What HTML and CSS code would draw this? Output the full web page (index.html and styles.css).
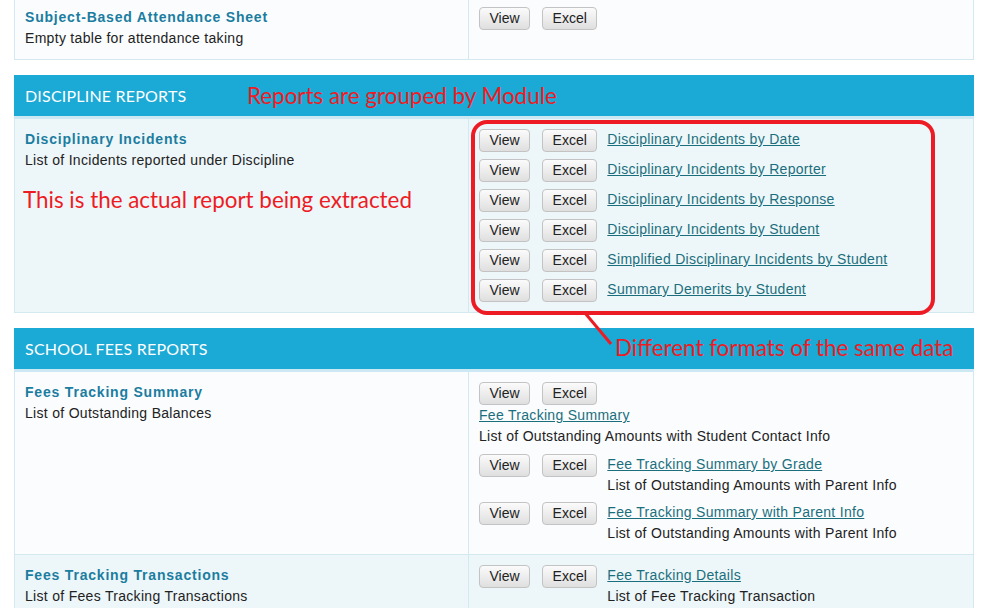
FILE: index.html
```html
<!DOCTYPE html>
<html lang="en">
<head>
  <meta charset="UTF-8">
  <title>Reports</title>
  <link rel="stylesheet" href="styles.css">
</head>
<body>
  <div class="page">
    <!-- tail of the previous group -->
    <div class="report-table">
      <div class="row">
        <div class="cell name">
          <a class="title">Subject-Based Attendance Sheet</a>
          <p class="desc">Empty table for attendance taking</p>
        </div>
        <div class="cell formats">
          <div class="item">
            <span class="buttons"><button>View</button><button>Excel</button></span>
          </div>
        </div>
      </div>
    </div>

    <section class="group">
      <h2 class="group-head">Discipline Reports <span class="note note-head">Reports are grouped by Module</span></h2>
      <div class="report-table">
        <div class="row alt">
          <div class="cell name">
            <a class="title">Disciplinary Incidents</a>
            <p class="desc">List of Incidents reported under Discipline</p>
            <p class="note note-cell">This is the actual report being extracted</p>
          </div>
          <div class="cell formats">
            <div class="item">
              <span class="buttons"><button>View</button><button>Excel</button></span>
              <div class="info"><a class="link">Disciplinary Incidents by Date</a></div>
            </div>
            <div class="item">
              <span class="buttons"><button>View</button><button>Excel</button></span>
              <div class="info"><a class="link">Disciplinary Incidents by Reporter</a></div>
            </div>
            <div class="item">
              <span class="buttons"><button>View</button><button>Excel</button></span>
              <div class="info"><a class="link">Disciplinary Incidents by Response</a></div>
            </div>
            <div class="item">
              <span class="buttons"><button>View</button><button>Excel</button></span>
              <div class="info"><a class="link">Disciplinary Incidents by Student</a></div>
            </div>
            <div class="item">
              <span class="buttons"><button>View</button><button>Excel</button></span>
              <div class="info"><a class="link">Simplified Disciplinary Incidents by Student</a></div>
            </div>
            <div class="item">
              <span class="buttons"><button>View</button><button>Excel</button></span>
              <div class="info"><a class="link">Summary Demerits by Student</a></div>
            </div>
          </div>
        </div>
      </div>
    </section>

    <section class="group">
      <h2 class="group-head">School Fees Reports <span class="note note-fees">Different formats of the same data</span></h2>
      <div class="report-table">
        <div class="row">
          <div class="cell name">
            <a class="title">Fees Tracking Summary</a>
            <p class="desc">List of Outstanding Balances</p>
          </div>
          <div class="cell formats">
            <div class="item stacked">
              <span class="buttons"><button>View</button><button>Excel</button></span>
              <div class="info">
                <a class="link">Fee Tracking Summary</a>
                <p class="desc">List of Outstanding Amounts with Student Contact Info</p>
              </div>
            </div>
            <div class="item described">
              <span class="buttons"><button>View</button><button>Excel</button></span>
              <div class="info">
                <a class="link">Fee Tracking Summary by Grade</a>
                <p class="desc">List of Outstanding Amounts with Parent Info</p>
              </div>
            </div>
            <div class="item described">
              <span class="buttons"><button>View</button><button>Excel</button></span>
              <div class="info">
                <a class="link">Fee Tracking Summary with Parent Info</a>
                <p class="desc">List of Outstanding Amounts with Parent Info</p>
              </div>
            </div>
          </div>
        </div>
        <div class="row alt">
          <div class="cell name">
            <a class="title">Fees Tracking Transactions</a>
            <p class="desc">List of Fees Tracking Transactions</p>
          </div>
          <div class="cell formats">
            <div class="item described">
              <span class="buttons"><button>View</button><button>Excel</button></span>
              <div class="info">
                <a class="link">Fee Tracking Details</a>
                <p class="desc">List of Fee Tracking Transaction</p>
              </div>
            </div>
          </div>
        </div>
      </div>
    </section>

    <!-- screenshot markup: box round the formats and its pointer -->
    <div class="mark-box"></div>
    <svg class="mark-line" width="40" height="40" viewBox="0 0 40 40">
      <line x1="3" y1="2" x2="29" y2="33" stroke="#ed1c24" stroke-width="3"></line>
    </svg>
  </div>
</body>
</html>
```

FILE: styles.css
```css
body {
  margin: 0;
  background: #fff;
  font-family: "Liberation Sans", Arial, sans-serif;
  font-size: 14px;
  line-height: 21px;
  letter-spacing: 0.3px;
  color: #222;
}

.page {
  position: relative;
  width: 960px;
  margin: -4px 0 0 14px;
}

.report-table {
  border: 1px solid #d3e8ef;
  border-top-width: 0;
  margin-bottom: 15px;
}

.page > .report-table {
  border-top-width: 1px;
}

.row {
  display: grid;
  grid-template-columns: 454px 1fr;
  background: #fafcfe;
}

.row + .row {
  border-top: 1px solid #d3e8ef;
}

.row.alt {
  background: #edf6f9;
}

.cell {
  padding: 10px;
}

.cell.name {
  border-right: 1px solid #d3e8ef;
}

.title {
  display: block;
  font-weight: bold;
  color: #1b7da0;
  letter-spacing: 0.8px;
}

.desc {
  margin: 0;
}

.group {
  margin: 0;
}

.group-head {
  position: relative;
  margin: 0;
  height: 41px;
  padding-left: 11px;
  background: #1ba9d5;
  border-bottom: 3px solid #cce8f2;
  font-family: Lato, "Liberation Sans", sans-serif;
  font-size: 16px;
  font-weight: normal;
  line-height: 41px;
  letter-spacing: 0.2px;
  text-transform: uppercase;
  color: #fff;
}

.item {
  display: flex;
  align-items: flex-start;
}

.item + .item {
  margin-top: 7px;
}

.item.described + .item {
  margin-top: 6px;
}

.item.stacked {
  flex-direction: column;
}

.buttons {
  display: flex;
  gap: 12px;
  margin-right: 10px;
  flex: none;
}

button {
  height: 23px;
  padding: 0 9.5px;
  font-family: "Liberation Sans", Arial, sans-serif;
  font-size: 14px;
  line-height: 21px;
  letter-spacing: 0;
  color: #222;
  background: linear-gradient(#fbfbfb, #dfdfdf);
  border: 1px solid #c3c3c3;
  border-radius: 4px;
}

.info {
  line-height: 21px;
}

.link {
  color: #1b6f7d;
  text-decoration: underline;
}

/* red markup drawn over the screenshot */
.note {
  font-family: Lato, "Liberation Sans", sans-serif;
  font-size: 22.4px;
  letter-spacing: 0;
  color: #ed1c24;
  text-transform: none;
}

.note-head {
  position: absolute;
  left: 233px;
  top: 0;
}

.note-fees {
  position: absolute;
  left: 601px;
  top: -1px;
}

.note-cell {
  margin: 15px 0 0 -2px;
  line-height: 28px;
}

.mark-box {
  position: absolute;
  left: 457px;
  top: 124px;
  width: 456px;
  height: 187px;
  border: 4px solid #ed1c24;
  border-radius: 16px;
}

.mark-line {
  position: absolute;
  left: 568px;
  top: 315px;
}
```
